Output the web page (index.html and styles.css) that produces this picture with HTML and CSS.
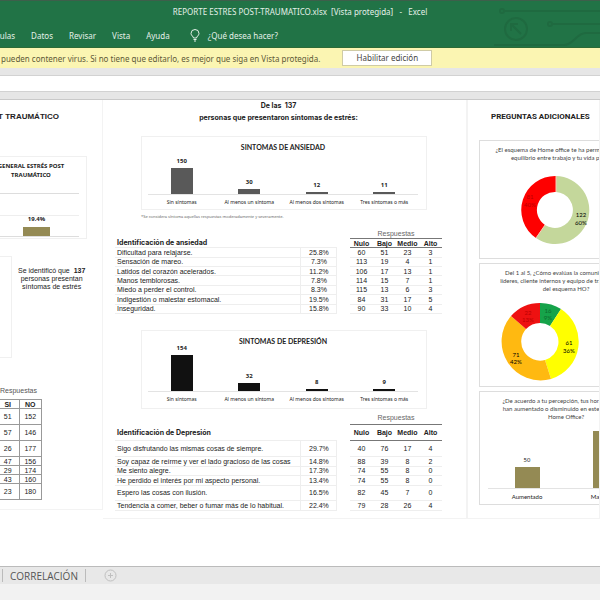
FILE: index.html
```html
<!DOCTYPE html>
<html lang="es">
  <head>
    <meta charset="UTF-8" />
    <meta name="viewport" content="width=device-width, initial-scale=1.0" />
    <title>REPORTE ESTRES POST-TRAUMATICO.xlsx - Excel</title>
    <link rel="stylesheet" href="styles.css">
  </head>
  <body>
    <header class="header">
      <svg class="circuit" width="110" height="47" viewBox="0 0 110 47">
        <g fill="none" stroke="#1f6a40" stroke-width="2">
          <circle cx="12" cy="10" r="2" />
          <path d="M14 10H110" />
          <circle cx="26" cy="28" r="11" />
          <path d="M31 33L21 23M21 30V23H28" />
          <circle cx="60" cy="23" r="2" />
          <path d="M62 23H110M4 44H74C84 44 86 32 96 32H110" />
        </g>
      </svg>
      <div class="window-title">REPORTE ESTRES POST-TRAUMATICO.xlsx&nbsp; [Vista protegida]&nbsp;&nbsp; -&nbsp;&nbsp; Excel</div>
      <nav class="ribbon">
        <a href="#">Fórmulas</a>
        <a href="#">Datos</a>
        <a href="#">Revisar</a>
        <a href="#">Vista</a>
        <a href="#">Ayuda</a>
        <a href="#" class="tell-me">
          <svg width="10" height="13" viewBox="0 0 10 13" fill="none" stroke="#e4f0e8">
            <path d="M3.5 9C3.5 7.500 1 6.500 1 4.500A4 4 0 0 1 9 4.500C9 6.500 6.500 7.500 6.500 9ZM3.500 10.500H6.500M4 12H6" />
          </svg>
          ¿Qué desea hacer?
        </a>
      </nav>
    </header>

    <div class="message-bar">
      <span>pueden contener virus. Si no tiene que editarlo, es mejor que siga en Vista protegida.</span>
      <button type="button">Habilitar edición</button>
    </div>
    <div class="formula-bar">
      <input type="text" aria-label="Barra de fórmulas">
    </div>

    <main class="sheet">
      <section class="panel stress">
        <div class="stress-inner">
          <h2>ESTRÉS POST TRAUMÁTICO</h2>
          <div class="general-chart">
            <h3>GENERAL ESTRÉS POST<br>TRAUMÁTICO</h3>
            <div class="general-plot">
              <span>19.4%</span>
              <div class="general-bar"></div>
            </div>
          </div>
          <div class="identified">
            <div class="empty-chart"></div>
            <p>Se identificó que&nbsp; <b>137</b><br>personas presentan<br>síntomas de estrés</p>
          </div>
          <table class="yes-no">
            <caption>Respuestas</caption>
            <tr><th>SI</th><th>NO</th></tr>
            <tr class="tall"><td>51</td><td>152</td></tr>
            <tr class="tall"><td>57</td><td>146</td></tr>
            <tr class="tall"><td>26</td><td>177</td></tr>
            <tr><td>47</td><td>156</td></tr>
            <tr><td>29</td><td>174</td></tr>
            <tr><td>43</td><td>160</td></tr>
            <tr class="tall"><td>23</td><td>180</td></tr>
          </table>
        </div>
      </section>

      <section class="panel symptoms">
        <h2>De las&nbsp; 137<br>personas que presentaron síntomas de estrés:</h2>

        <div class="chart anxiety">
          <h3>SINTOMAS DE ANSIEDAD</h3>
          <div class="bars">
            <div class="bar-item"><b>150</b><div class="bar" style="height: 26px"></div></div>
            <div class="bar-item"><b>30</b><div class="bar" style="height: 5px"></div></div>
            <div class="bar-item"><b>12</b><div class="bar" style="height: 2px"></div></div>
            <div class="bar-item"><b>11</b><div class="bar" style="height: 2px"></div></div>
          </div>
          <div class="bar-labels">
            <span>Sin síntomas</span><span>Al menos un síntoma</span><span>Al menos dos síntomas</span><span>Tres síntomas o más</span>
          </div>
        </div>
        <p class="note">*Se considera síntoma aquellas respuestas moderadamente y severamente.</p>

        <table class="answers anxiety-answers">
          <colgroup><col><col class="pct"><col class="space"><col class="num"><col class="num"><col class="num"><col class="num"></colgroup>
          <tr class="group"><td colspan="3"></td><td colspan="4">Respuestas</td></tr>
          <tr class="head"><th>Identificación de ansiedad</th><th></th><td></td><th>Nulo</th><th>Bajo</th><th>Medio</th><th>Alto</th></tr>
          <tr><td>Dificultad para relajarse.</td><td>25.8%</td><td></td><td>60</td><td>51</td><td>23</td><td>3</td></tr>
          <tr><td>Sensación de mareo.</td><td>7.3%</td><td></td><td>113</td><td>19</td><td>4</td><td>1</td></tr>
          <tr><td>Latidos del corazón acelerados.</td><td>11.2%</td><td></td><td>106</td><td>17</td><td>13</td><td>1</td></tr>
          <tr><td>Manos temblorosas.</td><td>7.8%</td><td></td><td>114</td><td>15</td><td>7</td><td>1</td></tr>
          <tr><td>Miedo a perder el control.</td><td>8.3%</td><td></td><td>115</td><td>13</td><td>6</td><td>3</td></tr>
          <tr><td>Indigestión o malestar estomacal.</td><td>19.5%</td><td></td><td>84</td><td>31</td><td>17</td><td>5</td></tr>
          <tr><td>Inseguridad.</td><td>15.8%</td><td></td><td>90</td><td>33</td><td>10</td><td>4</td></tr>
        </table>

        <div class="chart depression">
          <h3>SINTOMAS DE DEPRESIÓN</h3>
          <div class="bars">
            <div class="bar-item"><b>154</b><div class="bar" style="height: 36px"></div></div>
            <div class="bar-item"><b>32</b><div class="bar" style="height: 8px"></div></div>
            <div class="bar-item"><b>8</b><div class="bar" style="height: 2px"></div></div>
            <div class="bar-item"><b>9</b><div class="bar" style="height: 2px"></div></div>
          </div>
          <div class="bar-labels">
            <span>Sin síntomas</span><span>Al menos un síntoma</span><span>Al menos dos síntomas</span><span>Tres síntomas o más</span>
          </div>
        </div>

        <table class="answers depression-answers">
          <colgroup><col><col class="pct"><col class="space"><col class="num"><col class="num"><col class="num"><col class="num"></colgroup>
          <tr class="group"><td colspan="3"></td><td colspan="4">Respuestas</td></tr>
          <tr class="head tall"><th>Identificación de Depresión</th><th></th><td></td><th>Nulo</th><th>Bajo</th><th>Medio</th><th>Alto</th></tr>
          <tr class="tall"><td>Sigo disfrutando las mismas cosas de siempre.</td><td>29.7%</td><td></td><td>40</td><td>76</td><td>17</td><td>4</td></tr>
          <tr><td>Soy capaz de reírme y ver el lado gracioso de las cosas</td><td>14.8%</td><td></td><td>88</td><td>39</td><td>8</td><td>2</td></tr>
          <tr><td>Me siento alegre.</td><td>17.3%</td><td></td><td>74</td><td>55</td><td>8</td><td>0</td></tr>
          <tr><td>He perdido el interés por mi aspecto personal.</td><td>13.4%</td><td></td><td>74</td><td>55</td><td>8</td><td>0</td></tr>
          <tr class="tall"><td>Espero las cosas con ilusión.</td><td>16.5%</td><td></td><td>82</td><td>45</td><td>7</td><td>0</td></tr>
          <tr><td>Tendencia a comer, beber o fumar más de lo habitual.</td><td>22.4%</td><td></td><td>79</td><td>28</td><td>26</td><td>4</td></tr>
        </table>
      </section>

      <section class="panel extra">
        <h2>PREGUNTAS ADICIONALES</h2>

        <div class="card balance">
          <h3>¿El esquema de Home office te ha permitido un mejor<br>equilibrio entre trabajo y tu vida personal?</h3>
          <svg width="70" height="70" viewBox="-35 -35 70 70">
            <path fill="#c4d79b" d="M0 -34A34 34 0 1 1 -20 28L-11 15A18 18 0 1 0 0 -18Z" />
            <path fill="#fe0000" d="M-20 28A34 34 0 0 1 0 -34V-18A18 18 0 0 0 -11 15Z" />
            <path d="M0 -34V-18M-20 28L-11 15" stroke="#f9c9b4" />
            <text x="-26" y="-11" fill="#b00">81</text>
            <text x="-26" y="-3" fill="#b00">40%</text>
            <text x="25" y="7">122</text>
            <text x="25" y="15">60%</text>
          </svg>
        </div>

        <div class="card communication">
          <h3>Del 1 al 5, ¿Cómo evalúas la comunicación con<br>líderes, cliente internos y equipo de trabajo dentro<br>del esquema HO?</h3>
          <svg width="78" height="78" viewBox="-39 -39 78 78">
            <path fill="#16a34a" d="M0 -39A39 39 0 0 1 21 -33L10 -16A19 19 0 0 0 0 -19Z" />
            <path fill="#ffff00" d="M21 -33A39 39 0 0 1 11 37L5 18A19 19 0 0 0 10 -16Z" />
            <path fill="#ffb911" d="M11 37A39 39 0 0 1 -29 -26L-14 -13A19 19 0 0 0 5 18Z" />
            <path fill="#ee1111" d="M-29 -26A39 39 0 0 1 0 -39V-19A19 19 0 0 0 -14 -13Z" />
            <text x="8" y="-29" fill="#0b6b2c">16</text>
            <text x="8" y="-22" fill="#0b6b2c">9%</text>
            <text x="29" y="3">61</text>
            <text x="29" y="11">36%</text>
            <text x="-24" y="15">71</text>
            <text x="-24" y="22">42%</text>
            <text x="-12" y="-27" fill="#b00">22</text>
            <text x="-12" y="-20" fill="#b00">13%</text>
          </svg>
        </div>

        <div class="card hours">
          <h3>¿De acuerdo a tu percepción, tus horas laborales<br>han aumentado o disminuido en este periodo de<br>Home Office?</h3>
          <div class="bars">
            <div class="bar-item"><span>50</span><div class="bar" style="height: 21px"></div></div>
            <div class="bar-item"><span>132</span><div class="bar" style="height: 57px"></div></div>
          </div>
          <div class="bar-labels"><span>Aumentado</span><span>Mantenido</span></div>
        </div>
      </section>
    </main>

    <footer class="tabs">
      <button type="button" class="tab">CORRELACIÓN</button>
      <button type="button" class="add-tab" aria-label="Nueva hoja">
        <svg width="13" height="13" viewBox="0 0 13 13" fill="none" stroke="#c0c0c0">
          <circle cx="6.500" cy="6.500" r="5.500" />
          <path d="M4 6.500H9M6.500 4V9" />
        </svg>
      </button>
    </footer>
    <div class="status-bar"></div>
  </body>
</html>
```

FILE: styles.css
```css
* {
  box-sizing: border-box;
}

body {
  margin: 0;
  min-height: 100vh;
  display: flex;
  flex-direction: column;
  overflow-x: hidden;
  font-family: "Liberation Sans", Arial, sans-serif;
  font-size: 7px;
  color: #222;
  background-color: #fff;
}

h2,
h3,
p {
  margin: 0;
}

button,
input {
  font-family: inherit;
}

.header,
.message-bar {
  font-family: "Noto Sans", sans-serif;
  font-size: 8px;
}

/* Title and ribbon */
.header {
  position: relative;
  height: 48px;
  overflow: hidden;
  color: #e4f0e8;
  background-color: #217346;
  border-top: 1px solid #3d5f4b;
  border-bottom: 1px solid #2d6b35;
}

.circuit {
  position: absolute;
  top: 0;
  right: 0;
}

.window-title {
  position: relative;
  height: 23px;
  line-height: 22px;
  text-align: center;
  white-space: pre;
}

.ribbon {
  display: flex;
  gap: 16px;
  height: 23px;
  align-items: center;
  margin-left: -20px;
}

.ribbon a {
  color: inherit;
  text-decoration: none;
  white-space: nowrap;
}

.ribbon .tell-me {
  display: flex;
  align-items: center;
  gap: 8px;
  margin-left: 4px;
}

.message-bar {
  display: flex;
  align-items: center;
  gap: 22px;
  height: 20px;
  padding-left: 1px;
  color: #5d5938;
  background-color: #fbf5b2;
  white-space: nowrap;
}

.message-bar button {
  width: 90px;
  height: 16px;
  padding: 0;
  font-size: 8px;
  line-height: 12px;
  color: #444;
  background-color: #fff;
  border: 1px solid #cfcba6;
}

.formula-bar {
  padding: 7px 0;
  background-color: #e6e6e6;
  border-bottom: 1px solid #c9c9c9;
}

.formula-bar input {
  display: block;
  width: 100%;
  height: 17px;
  border: 1px solid #d2d2d2;
  border-width: 1px 0;
  background-color: #fff;
}

/* Worksheet */
.sheet {
  flex: 1;
  display: grid;
  grid-template-columns: 103px 364px minmax(0, 1fr);
  align-items: start;
  background-color: #fff;
}

.panel {
  overflow: hidden;
  border: 1px solid #f3f3f3;
  border-top: none;
}

.panel h2 {
  font-size: 7px;
  line-height: 12px;
}

.panel h3 {
  font-family: Lato, sans-serif;
  font-size: 7px;
  line-height: 8px;
  text-align: center;
}

.stress {
  display: flex;
  justify-content: flex-end;
  height: 410px;
  border-left: none;
}

.stress-inner {
  flex: none;
  width: 134px;
  display: flex;
  flex-direction: column;
  align-items: flex-end;
}

.panel.stress h2 {
  margin: 11px 43px 33px 0;
  font-size: 8px;
  white-space: nowrap;
}

.general-chart {
  width: 118px;
  height: 83px;
  margin-right: 15px;
  padding: 5px 7px;
  border: 1px solid #f0f0f0;
}

.panel .general-chart h3 {
  padding-left: 6px;
  font-family: "Noto Sans", sans-serif;
  font-size: 6px;
  line-height: 9px;
  white-space: nowrap;
}

.general-plot {
  display: flex;
  flex-direction: column;
  align-items: center;
  justify-content: flex-end;
  height: 44px;
  margin-top: 13px;
  padding-left: 17px;
  font: bold 6px "Noto Sans", sans-serif;
  border-top: 1px solid #ddd;
  border-bottom: 1px solid #ddd;
  background: linear-gradient(#eee, #eee) 0 21px / 100% 1px no-repeat;
}

.general-bar {
  width: 27px;
  height: 9px;
  margin-top: 4px;
  background-color: #948a54;
}

.identified {
  display: flex;
  gap: 6px;
  width: 100%;
  margin-top: 17px;
}

.empty-chart {
  width: 44px;
  height: 102px;
  border: 1px solid #f0f0f0;
}

.identified p {
  padding-top: 11px;
  line-height: 8px;
  text-align: center;
  white-space: nowrap;
}

.yes-no {
  width: 46px;
  margin: 28px 60px 0 0;
  border-collapse: collapse;
  table-layout: fixed;
  text-align: center;
}

.yes-no caption {
  padding: 0 5px 3px 0;
  line-height: 10px;
  text-align: right;
  color: #555;
}

.yes-no th,
.yes-no td {
  height: 9px;
  padding: 0;
  line-height: 7px;
  border: 1px solid #999;
}

.yes-no .tall td {
  height: 16px;
}

.symptoms {
  height: 419px;
  padding: 0 24px 0 12px;
  border-left: none;
}

.symptoms h2 {
  font-family: Inter, sans-serif;
  text-align: center;
}

/* Bar charts */
.chart {
  width: 286px;
  margin-left: 26px;
  padding: 0 8px 0 6px;
  border: 1px solid #f0f0f0;
}

.anxiety {
  height: 74px;
  margin-top: 12px;
  padding-top: 6px;
}

.depression {
  height: 79px;
  margin-top: 16px;
  padding-top: 6px;
}

.bars {
  display: flex;
  align-items: flex-end;
  border-bottom: 1px solid #e3e3e3;
}

.anxiety .bars {
  height: 44px;
}

.depression .bars {
  height: 47px;
}

.bar-item {
  flex: 1;
  display: flex;
  flex-direction: column;
  align-items: center;
  gap: 3px;
  font: 6px/8px "Noto Sans", sans-serif;
}

.bar {
  width: 22px;
  background-color: #595959;
}

.depression .bar {
  background-color: #111;
}

.bar-labels {
  display: flex;
  padding-top: 3px;
  font: 5px/8px "Noto Sans", sans-serif;
}

.bar-labels span {
  flex: 1 1 0;
  text-align: center;
  white-space: nowrap;
}

.note {
  margin: 4px 0 0 26px;
  font: 4px/6px "Noto Sans", sans-serif;
  color: #666;
}

/* Answer tables */
.answers {
  width: 100%;
  border-collapse: collapse;
  table-layout: fixed;
}

.anxiety-answers {
  height: 85px;
  margin-top: 9px;
}

.depression-answers {
  height: 100px;
  margin-top: 2px;
}

.answers .pct {
  width: 36px;
}

.answers .space {
  width: 13px;
}

.answers .num {
  width: 23px;
}

.answers th,
.answers td {
  height: 9px;
  padding: 0;
  line-height: 7px;
  text-align: center;
  white-space: nowrap;
  border-bottom: 1px solid #eee;
}

.answers th:first-child {
  font-family: Inter, sans-serif;
}

.answers th:first-child,
.answers td:first-child {
  padding-left: 2px;
  text-align: left;
}

.answers td:nth-child(3),
.answers .group td {
  border-bottom: none;
}

.depression-answers .group td {
  height: 13px;
}

.answers .group td:last-child {
  color: #666;
}

.answers .head th:nth-child(n + 4) {
  border-top: 1px solid #777;
  border-bottom: 1px solid #777;
}

.answers .tall th,
.answers .tall td {
  height: 15px;
}

.answers td:nth-child(2) {
  border-left: 1px solid #eee;
  border-right: 1px solid #eee;
}

.answers .group td:nth-child(2) {
  border: none;
}

/* Additional questions */
.extra {
  height: 419px;
  padding-left: 11px;
}

.panel.extra h2 {
  margin: 11px 0 17px 12px;
  font-family: Roboto, sans-serif;
  font-size: 8px;
  white-space: nowrap;
}

.card {
  display: flex;
  flex-direction: column;
  width: 174px;
  margin-bottom: 4px;
  padding: 5px 8px 0;
  border: 1px solid #ddd;
}

.panel .card h3 {
  font-size: 6px;
  font-weight: normal;
  white-space: nowrap;
  color: #444;
}

.card text {
  font: 6px Lato, sans-serif;
  text-anchor: middle;
}

.balance {
  height: 119px;
}

.balance svg {
  margin: 13px 0 0 33px;
}

.communication {
  height: 124px;
}

.communication svg {
  margin: 10px 0 0 13px;
}

.hours {
  height: 114px;
}

.hours .bars {
  height: 68px;
}

.hours .bar {
  width: 25px;
  background-color: #948a54;
}

.hours .bar-labels {
  padding-top: 4px;
  font-family: Lato, sans-serif;
  font-size: 6px;
}

/* Sheet tabs */
.tabs {
  display: flex;
  align-items: center;
  height: 18px;
  background-color: #e8e8e8;
  border-top: 1px solid #bbb;
}

.tabs button {
  padding: 0;
  border: none;
  background: none;
}

.tabs .tab {
  height: 13px;
  margin-left: 2px;
  padding: 0 7px;
  font: 10px/10px "Open Sans", sans-serif;
  color: #555;
  border-left: 1px solid #bbb;
  border-right: 1px solid #bbb;
}

.tabs .add-tab {
  display: flex;
  margin-left: 18px;
}

.status-bar {
  height: 16px;
  background-color: #f2f2f2;
}
```
